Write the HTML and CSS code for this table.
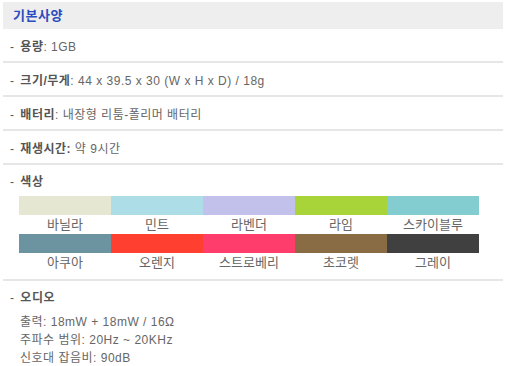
FILE: index.html
```html
<!DOCTYPE html>
<html lang="ko">
<head>
<meta charset="utf-8">
<link rel="stylesheet" href="styles.css">
</head>
<body>
<div class="spec">
  <div class="head">기본사양</div>
  <div class="row"><span class="dash">-</span> <b>용량</b>: 1GB</div>
  <div class="row"><span class="dash">-</span> <b>크기/무게</b>: 44 x 39.5 x 30 (W x H x D) / 18g</div>
  <div class="row"><span class="dash">-</span> <b>배터리</b>: 내장형 리툼-폴리머 배터리</div>
  <div class="row"><span class="dash">-</span> <b>재생시간:</b> 약 9시간</div>
  <div class="block colors">
    <div class="label"><span class="dash">-</span> <b>색상</b></div>
    <div class="swatches">
      <div class="sw"><div class="chip" style="background:#e6e7d3"></div><div class="name">바닐라</div></div>
      <div class="sw"><div class="chip" style="background:#addee8"></div><div class="name">민트</div></div>
      <div class="sw"><div class="chip" style="background:#c1c1ec"></div><div class="name">라벤더</div></div>
      <div class="sw"><div class="chip" style="background:#a8d43a"></div><div class="name">라임</div></div>
      <div class="sw"><div class="chip" style="background:#83cdd0"></div><div class="name">스카이블루</div></div>
      <div class="sw"><div class="chip" style="background:#6c94a0"></div><div class="name">아쿠아</div></div>
      <div class="sw"><div class="chip" style="background:#ff4030"></div><div class="name">오렌지</div></div>
      <div class="sw"><div class="chip" style="background:#ff3d6c"></div><div class="name">스트로베리</div></div>
      <div class="sw"><div class="chip" style="background:#896c43"></div><div class="name">초코렛</div></div>
      <div class="sw"><div class="chip" style="background:#404040"></div><div class="name">그레이</div></div>
    </div>
  </div>
  <div class="audio">
    <div class="label"><span class="dash">-</span> <b>오디오</b></div>
    <div class="lines">
      <div class="line">출력: 18mW + 18mW / 16Ω</div>
      <div class="line">주파수 범위: 20Hz ~ 20KHz</div>
      <div class="line">신호대 잡음비: 90dB</div>
    </div>
  </div>
</div>
</body>
</html>
```
FILE: styles.css
```css
html, body { margin: 0; padding: 0; background: #fff; }
body {
  font-family: "Liberation Sans", "Noto Sans CJK KR", sans-serif;
  font-size: 12px;
  color: #666;
  letter-spacing: 0.5px;
}
.spec {
  width: 500px;
  margin: 2px 0 0 3px;
}
.head {
  height: 27px;
  line-height: 27px;
  background: #eee;
  padding-left: 10px;
  font-size: 13px;
  font-weight: bold;
  color: #2b4cc0;
}
.row {
  height: 31px;
  padding-top: 1px;
  line-height: 34px;
  padding-left: 7px;
  border-bottom: 2px solid #e6e6e6;
}
b { color: #555; font-weight: bold; }
.dash { color: #555; margin-right: 2px; }
.colors {
  border-bottom: 2px solid #e6e6e6;
  padding: 8px 0 7px 7px;
}
.label { line-height: 18px; }
.swatches {
  display: grid;
  grid-template-columns: repeat(5, 92px);
  margin: 5px 0 0 9px;
}
.chip { height: 19px; }
.name {
  text-align: center;
  font-size: 13px;
  line-height: 19px;
  letter-spacing: 0;
}
.audio { padding: 8px 0 0 7px; }
.lines {
  margin-top: 6px;
  padding-left: 10px;
}
.line { line-height: 18px; }
```
